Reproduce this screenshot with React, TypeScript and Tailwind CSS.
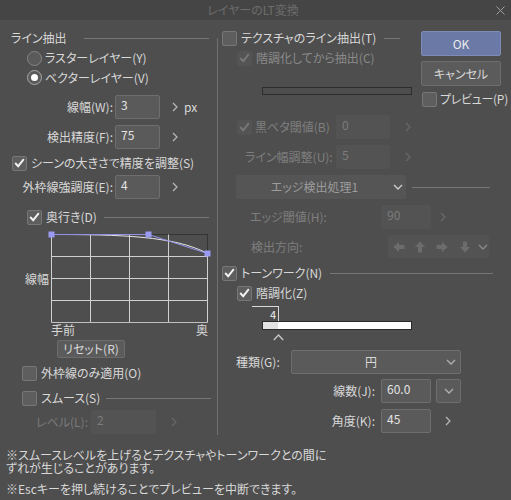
import React from "react";

const CheckBox: React.FC<{ checked?: boolean; disabled?: boolean }> = ({ checked, disabled }) => (
  <span
    className={
      disabled
        ? "flex h-[15px] w-[15px] shrink-0 items-center justify-center rounded-[2px] bg-[#545454]"
        : "flex h-[15px] w-[15px] shrink-0 items-center justify-center rounded-[2px] border border-[#777777] bg-[#5e5e5e]"
    }
  >
    {checked && (
      <svg width="11" height="10" viewBox="0 0 11 10">
        <path d="M1.2 5 L4.2 8.2 L9.8 1.2" fill="none" stroke={disabled ? "#787878" : "#f4f4f4"} strokeWidth="1.9" />
      </svg>
    )}
  </span>
);

const Radio: React.FC<{ selected?: boolean }> = ({ selected }) => (
  <span
    className={
      selected
        ? "flex h-[15px] w-[15px] shrink-0 items-center justify-center rounded-full border border-[#a8a8a8] bg-[#5a5a5a]"
        : "flex h-[15px] w-[15px] shrink-0 items-center justify-center rounded-full border border-[#858585] bg-[#5a5a5a]"
    }
  >
    {selected && <span className="h-[7px] w-[7px] rounded-full bg-white" />}
  </span>
);

const ChevronRight: React.FC<{ disabled?: boolean }> = ({ disabled }) => (
  <svg width="6" height="10" viewBox="0 0 6 10" className="shrink-0">
    <path d="M1 1 L5 5 L1 9" fill="none" stroke={disabled ? "#686868" : "#b8b8b8"} strokeWidth="1.2" />
  </svg>
);

const ChevronDown: React.FC<{ color?: string }> = ({ color = "#c8c8c8" }) => (
  <svg width="10" height="6" viewBox="0 0 10 6" className="shrink-0">
    <path d="M1 1 L5 5 L9 1" fill="none" stroke={color} strokeWidth="1.3" />
  </svg>
);

const Field: React.FC<{ value: string; className: string; disabled?: boolean }> = ({ value, className, disabled }) => (
  <div
    className={
      (disabled
        ? "h-[24px] shrink-0 rounded-[2px] bg-[#535353] pl-[6px] pt-[3px] text-[12px] leading-[14px] text-[#7c7c7c] "
        : "h-[24px] shrink-0 rounded-[2px] border border-[#6e6e6e] bg-[#5a5a5a] pl-[5px] pt-[2px] text-[12px] leading-[14px] text-[#e4e4e4] ") +
      className
    }
  >
    {value}
  </div>
);

const Arrow: React.FC<{ rot: number }> = ({ rot }) => (
  <svg width="12" height="12" viewBox="0 0 12 12" className="shrink-0" style={{ transform: `rotate(${rot}deg)` }}>
    <path d="M0.5 6 L6 0.8 L6 4 L11.5 4 L11.5 8 L6 8 L6 11.2 Z" fill="#6c6c6c" />
  </svg>
);

const Graph: React.FC = () => (
  <svg width="159" height="91" viewBox="0 0 159 91" overflow="visible" className="shrink-0">
    <rect x="1.5" y="1.5" width="156" height="88" fill="none" stroke="#343434" />
    {[40.5, 79.5, 118.5].map((x) => (
      <line key={x} x1={x} y1="1.5" x2={x} y2="89.5" stroke="#d0d0d0" />
    ))}
    {[23.5, 45.5, 67.5].map((y) => (
      <line key={y} x1="1.5" y1={y} x2="157.5" y2={y} stroke="#d0d0d0" />
    ))}
    <line x1="1.5" y1="1.5" x2="1.5" y2="89.5" stroke="#d0d0d0" />
    <line x1="1.5" y1="89.5" x2="157.5" y2="89.5" stroke="#c0c0c0" />
    <line x1="157.5" y1="20.5" x2="157.5" y2="89.5" stroke="#d0d0d0" />
    <path d="M1.5 1.5 C 70 1.5, 125 3, 157.5 20.5" fill="none" stroke="#e6e6e6" />
    <polyline points="1.5,1.5 98.5,1.5 157.5,20.5" fill="none" stroke="#9090e8" />
    <rect x="-1.5" y="-1.5" width="6" height="6" fill="#9a9af2" />
    <rect x="95.5" y="-1.5" width="6" height="6" fill="#9a9af2" />
    <rect x="154.5" y="17.5" width="6" height="6" fill="#9a9af2" />
  </svg>
);

export default function App() {
  return (
    <div className="flex h-[500px] w-[511px] flex-col overflow-hidden bg-[#4e4e4e] font-['Noto_Sans_CJK_JP',sans-serif] text-[12px] text-[#d8d8d8] [font-feature-settings:'palt']">
      {/* title bar */}
      <div className="flex h-[20px] shrink-0 items-center bg-[#454545]">
        <div className="flex-1 pl-[10px] text-center text-[12px] text-[#6c6c6c]">レイヤーのLT変換</div>
        <svg width="9" height="9" viewBox="0 0 9 9" className="mr-[6px]">
          <path d="M0.5 0.5 L8.5 8.5 M8.5 0.5 L0.5 8.5" stroke="#a0a0a0" strokeWidth="1" />
        </svg>
      </div>

      <div className="flex">
        {/* left column */}
        <div className="flex w-[217px] shrink-0 flex-col pt-[8px]">
          <div className="flex h-[20px] items-center pl-[11px] pr-[8px]">
            <span>ライン抽出</span>
            <div className="ml-[17px] h-px flex-1 bg-[#767676]" />
          </div>
          <div className="flex h-[20px] items-center gap-[3px] pl-[27px]">
            <Radio />
            <span>ラスターレイヤー(Y)</span>
          </div>
          <div className="flex h-[19px] items-center gap-[3px] pl-[27px]">
            <Radio selected />
            <span>ベクターレイヤー(V)</span>
          </div>

          <div className="mt-[8px] flex h-[24px] items-center">
            <span className="w-[113px] text-right">線幅(W):</span>
            <Field value="3" className="ml-[2px] w-[45px]" />
            <span className="ml-[12px]"><ChevronRight /></span>
            <span className="ml-[6px]">px</span>
          </div>
          <div className="mt-[6px] flex h-[24px] items-center">
            <span className="w-[113px] text-right">検出精度(F):</span>
            <Field value="75" className="ml-[2px] w-[45px]" />
            <span className="ml-[12px]"><ChevronRight /></span>
          </div>
          <div className="mt-[4px] flex h-[20px] items-center gap-[4px] pl-[12px]">
            <CheckBox checked />
            <span>シーンの大きさで精度を調整(S)</span>
          </div>
          <div className="mt-[2px] flex h-[24px] items-center">
            <span className="w-[113px] text-right">外枠線強調度(E):</span>
            <Field value="4" className="ml-[2px] w-[45px]" />
            <span className="ml-[12px]"><ChevronRight /></span>
          </div>

          <div className="mt-[8px] flex h-[20px] items-center pl-[27px] pr-[8px]">
            <CheckBox checked />
            <span className="ml-[4px]">奥行き(D)</span>
            <div className="ml-[7px] h-px flex-1 bg-[#767676]" />
          </div>

          <div className="mt-[6px] flex items-center">
            <span className="w-[50px] pr-px text-right">線幅</span>
            <Graph />
          </div>
          <div className="flex h-[12px] w-[208px] items-center justify-between pl-[51px] leading-[12px]">
            <span>手前</span>
            <span>奥</span>
          </div>

          <div className="ml-[57px] mt-[4px] flex h-[18px] w-[68px] items-center justify-center rounded-[2px] border border-[#6c6c6c] bg-[#5b5b5b]">
            リセット(R)
          </div>

          <div className="mt-[5px] flex h-[20px] items-center gap-[4px] pl-[22px]">
            <CheckBox />
            <span>外枠線のみ適用(O)</span>
          </div>
          <div className="mt-[5px] flex h-[20px] items-center pl-[22px] pr-[6px]">
            <CheckBox />
            <span className="ml-[4px]">スムース(S)</span>
            <div className="ml-[6px] h-px flex-1 bg-[#767676]" />
          </div>
          <div className="mt-[2px] flex h-[24px] items-center">
            <span className="w-[88px] text-right text-[#7a7a7a]">レベル(L):</span>
            <Field value="2" disabled className="ml-[3px] w-[65px]" />
            <span className="ml-[15px]"><ChevronRight disabled /></span>
          </div>
        </div>

        {/* divider */}
        <div className="mt-[18px] h-[397px] w-px shrink-0 bg-[#707070]" />

        {/* right column */}
        <div className="flex flex-1 flex-col pt-[8px]">
          <div className="flex items-start">
            <div className="flex w-[196px] shrink-0 flex-col">
              <div className="flex h-[20px] items-center pl-[4px] pr-[14px]">
                <CheckBox />
                <span className="ml-[4px]">テクスチャのライン抽出(T)</span>
                <div className="ml-[8px] h-px flex-1 bg-[#767676]" />
              </div>
              <div className="flex h-[20px] items-center gap-[4px] pl-[19px]">
                <CheckBox checked disabled />
                <span className="text-[#8a8a8a]">階調化してから抽出(C)</span>
              </div>
              <div className="ml-[44px] mt-[19px] h-[8px] w-[150px] border border-[#2c2c2c]" />
            </div>
            <div className="ml-[7px] flex w-[80px] shrink-0 flex-col">
              <div className="mt-[3px] flex h-[25px] items-center justify-center rounded-[2px] border border-[#7d8bb6] bg-[#6a79a6] text-[#ececec]">
                OK
              </div>
              <div className="mt-[5px] flex h-[25px] items-center justify-center rounded-[2px] border border-[#6e6e6e] bg-[#5b5b5b]">
                キャンセル
              </div>
              <div className="mt-[5px] flex h-[16px] items-center gap-[3px] whitespace-nowrap pl-px">
                <CheckBox />
                <span className="tracking-[-0.3px]">プレビュー(P)</span>
              </div>
            </div>
          </div>

          <div className="mt-[8px] flex h-[24px] items-center">
            <div className="flex w-[118px] items-center gap-[3px] pl-[19px]">
              <CheckBox checked disabled />
              <span className="text-[#7e7e7e]">黒ベタ閾値(B)</span>
            </div>
            <Field value="0" disabled className="w-[54px]" />
            <span className="ml-[15px]"><ChevronRight disabled /></span>
          </div>
          <div className="mt-[6px] flex h-[24px] items-center">
            <span className="w-[118px] pl-[27px] text-[#7e7e7e]">ライン幅調整(U):</span>
            <Field value="5" disabled className="w-[54px]" />
            <span className="ml-[15px]"><ChevronRight disabled /></span>
          </div>
          <div className="mt-[6px] flex h-[24px] items-center pr-[21px]">
            <div className="ml-[18px] flex h-[24px] w-[170px] items-center rounded-[2px] bg-[#555555]">
              <span className="flex-1 text-center text-[#9c9c9c]">エッジ検出処理1</span>
              <span className="mr-[3px]"><ChevronDown color="#d0d0d0" /></span>
            </div>
            <div className="ml-[6px] h-px flex-1 bg-[#767676]" />
          </div>
          <div className="mt-[6px] flex h-[24px] items-center">
            <span className="w-[163px] pl-[32px] text-[#7e7e7e]">エッジ閾値(H):</span>
            <Field value="90" disabled className="w-[50px]" />
            <span className="ml-[9px]"><ChevronRight disabled /></span>
          </div>
          <div className="mt-[6px] flex h-[23px] items-center">
            <span className="w-[170px] pl-[33px] text-[#7e7e7e]">検出方向:</span>
            <div className="flex h-[23px] w-[101px] items-center rounded-[2px] bg-[#535353] pl-[5px]">
              <Arrow rot={0} />
              <span className="ml-[9px]"><Arrow rot={90} /></span>
              <span className="ml-[10px]"><Arrow rot={180} /></span>
              <span className="ml-[11px]"><Arrow rot={270} /></span>
              <span className="ml-[7px]"><ChevronDown color="#8a8a8a" /></span>
            </div>
          </div>

          <div className="mt-[5px] flex h-[20px] items-center pl-[4px] pr-[18px]">
            <CheckBox checked />
            <span className="ml-[4px]">トーンワーク(N)</span>
            <div className="ml-[8px] h-px flex-1 bg-[#767676]" />
          </div>
          <div className="flex h-[20px] items-center gap-[4px] pl-[19px]">
            <CheckBox checked />
            <span>階調化(Z)</span>
          </div>
          <div className="h-[18px] pl-[34px] pt-[3px]">
            <div className="h-[15px] w-[27px] border-r border-t border-[#d8d8d8] pr-[2px] text-right text-[11px] leading-[14px] text-[#f0f0f0]">
              4
            </div>
          </div>
          <div className="ml-[44px] flex h-[9px] w-[150px] border border-[#2a2a2a] bg-white">
            <div className="h-full w-[15px] bg-[#e2e2e2]" />
          </div>
          <div className="h-[15px] pl-[55px] pt-[4px]">
            <svg width="11" height="7" viewBox="0 0 11 7">
              <path d="M0.8 6 L5.5 1 L10.2 6" fill="none" stroke="#c8c8c8" strokeWidth="1.3" />
            </svg>
          </div>

          <div className="mt-[5px] flex h-[24px] items-center">
            <span className="w-[73px] pl-[18px]">種類(G):</span>
            <div className="flex h-[24px] w-[170px] items-center rounded-[2px] border border-[#6e6e6e] bg-[#5a5a5a]">
              <span className="flex-1 pl-[4px] text-center">円</span>
              <span className="mr-[4px]"><ChevronDown color="#b0b0b0" /></span>
            </div>
          </div>
          <div className="mt-[5px] flex h-[24px] items-center">
            <span className="w-[157px] text-right">線数(J):</span>
            <Field value="60.0" className="ml-[6px] w-[50px]" />
            <div className="ml-[5px] flex h-[24px] w-[25px] items-center justify-center rounded-[2px] border border-[#6e6e6e] bg-[#5a5a5a]">
              <ChevronDown color="#b0b0b0" />
            </div>
          </div>
          <div className="mt-[6px] flex h-[24px] items-center">
            <span className="w-[157px] text-right">角度(K):</span>
            <Field value="45" className="ml-[6px] w-[50px]" />
            <span className="ml-[14px]"><ChevronRight /></span>
          </div>
        </div>
      </div>

      {/* notes */}
      <div className="mt-[13px] pl-[6px] leading-[13px]">
        <p>
          ※スムースレベルを上げるとテクスチャやトーンワークとの間に
          <br />
          ずれが生じることがあります。
        </p>
        <p className="mt-[8px]">※Escキーを押し続けることでプレビューを中断できます。</p>
      </div>
    </div>
  );
}
